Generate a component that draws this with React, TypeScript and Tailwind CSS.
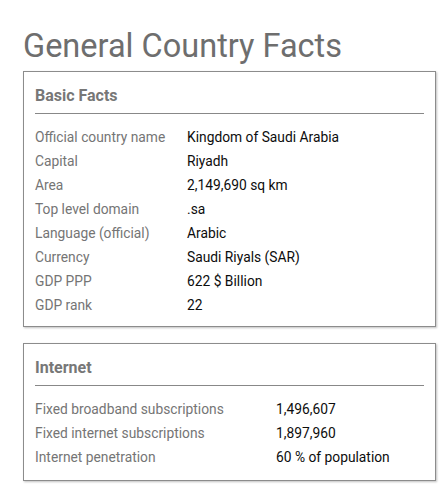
const basicFacts: [string, string][] = [
  ['Official country name', 'Kingdom of Saudi Arabia'],
  ['Capital', 'Riyadh'],
  ['Area', '2,149,690 sq km'],
  ['Top level domain', '.sa'],
  ['Language (official)', 'Arabic'],
  ['Currency', 'Saudi Riyals (SAR)'],
  ['GDP PPP', '622 $ Billion'],
  ['GDP rank', '22'],
];

const internetFacts: [string, string][] = [
  ['Fixed broadband subscriptions', '1,496,607'],
  ['Fixed internet subscriptions', '1,897,960'],
  ['Internet penetration', '60 % of population'],
];

function FactBox({
  title,
  rows,
  labelWidth,
  className,
}: {
  title: string;
  rows: [string, string][];
  labelWidth: string;
  className?: string;
}) {
  return (
    <section
      className={`border border-[#8c8c8c] shadow-[1px_1px_2px_rgba(0,0,0,0.25)] px-[11px] pt-3 ${className ?? ''}`}
    >
      <h2 className="text-base leading-6 font-bold text-[#777] pb-[5px] border-b border-[#888]">
        {title}
      </h2>
      <dl className="pt-[11px]">
        {rows.map(([label, value]) => (
          <div key={label} className="flex h-6 items-center text-[13.8px]">
            <dt className={`${labelWidth} text-[#757575]`}>{label}</dt>
            <dd className="text-[#0d0d0d]">{value}</dd>
          </div>
        ))}
      </dl>
    </section>
  );
}

export default function App() {
  return (
    <div className="w-[444px] pl-[23px] pr-2 pb-2 bg-white font-['Roboto',sans-serif]">
      <h1 className="pt-[26px] text-[32.5px] leading-10 text-[#6e6e6e]">General Country Facts</h1>
      <FactBox title="Basic Facts" rows={basicFacts} labelWidth="w-[152px]" className="mt-[5px] pb-[9px]" />
      <FactBox title="Internet" rows={internetFacts} labelWidth="w-[241px]" className="mt-4 pb-[11px]" />
    </div>
  );
}
